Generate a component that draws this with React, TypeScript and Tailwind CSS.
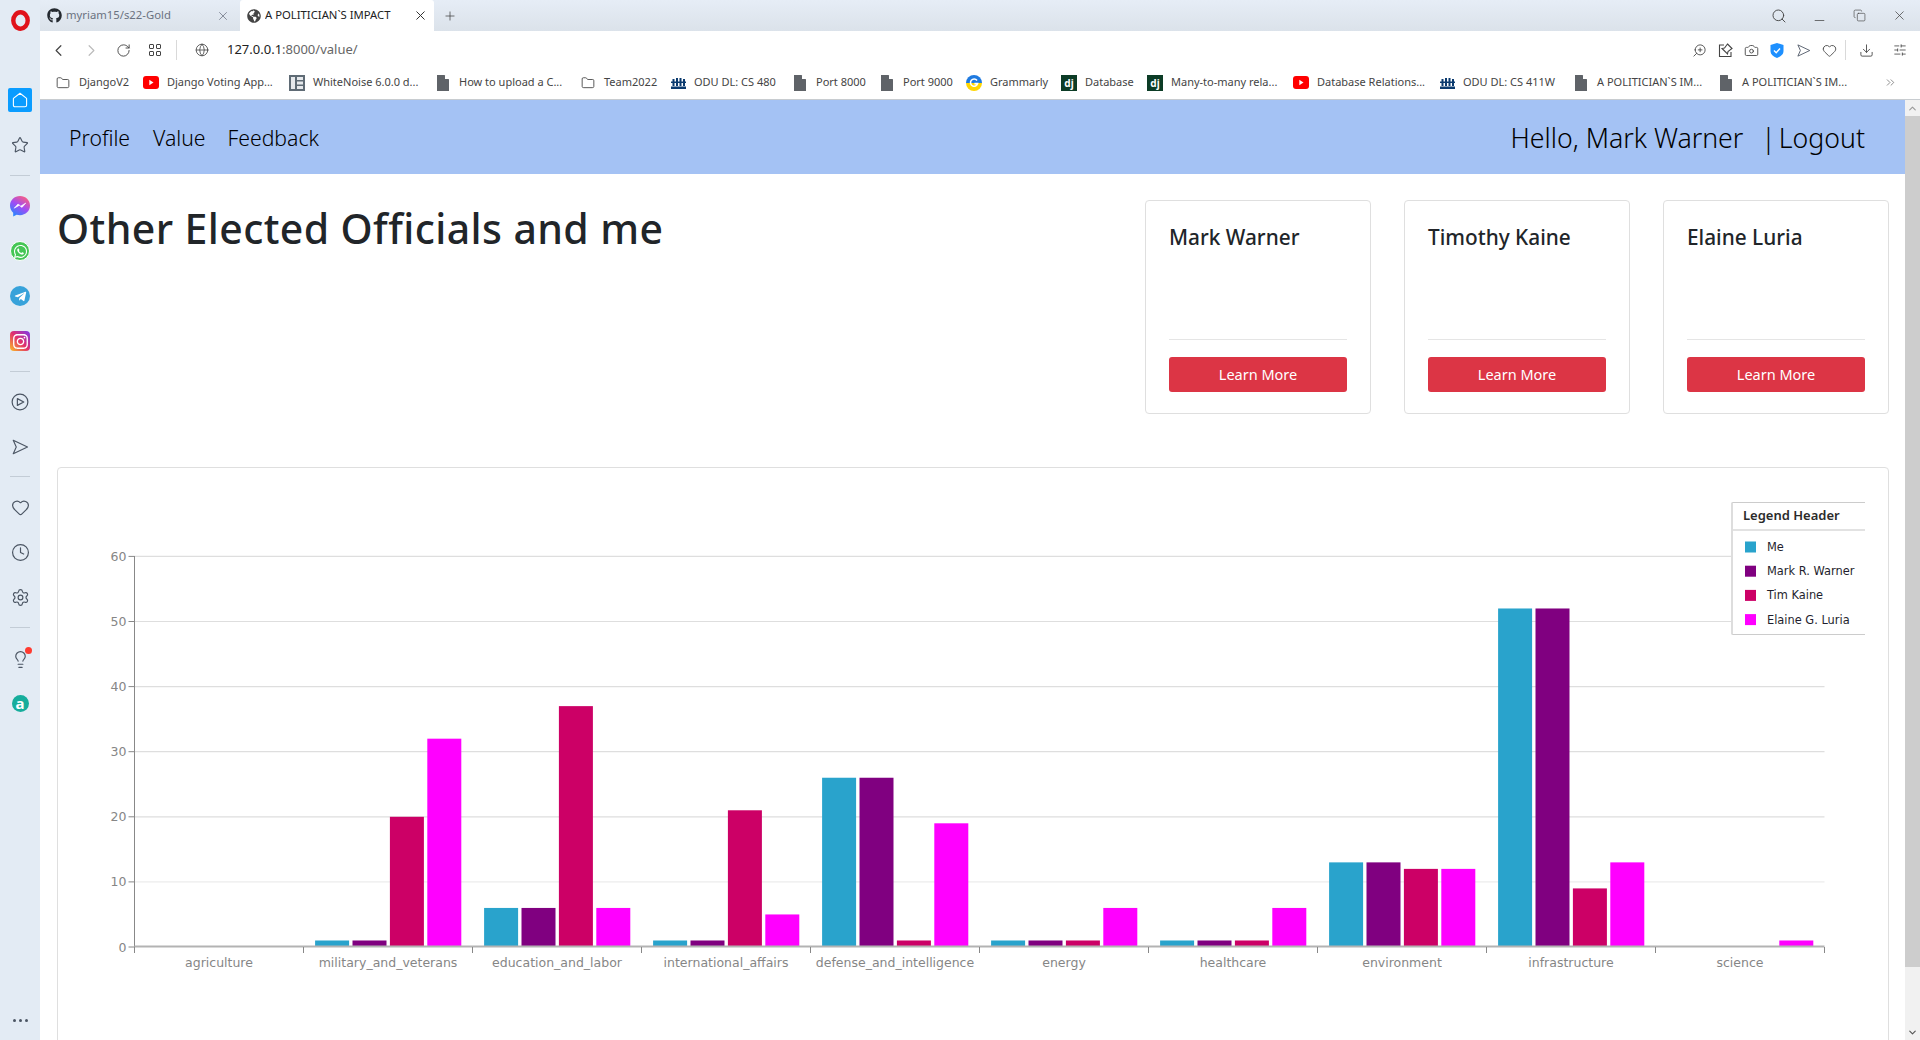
import React from "react";
import { ChevronLeft, ChevronRight, RotateCw, Globe, Search, Minus, Copy, X, Plus, Folder, ZoomIn, Camera, Heart, Download, SlidersHorizontal, Star, Clock, Settings, Lightbulb, ChevronsRight, ChevronUp, ChevronDown } from "lucide-react";
import { FaGithub, FaWhatsapp, FaTelegramPlane, FaInstagram, FaGlobeAmericas } from "react-icons/fa";

const ui = "font-['Noto_Sans','Open_Sans',sans-serif]";

function SendOutline({ size = 18, sw = 1.5 }: { size?: number; sw?: number }) {
  return (
    <svg width={size} height={size} viewBox="0 0 24 24" fill="none" stroke="#4b5563" strokeWidth={sw} strokeLinejoin="round">
      <path d="M3 3 L22 12 L3 21 L7 12 Z" />
    </svg>
  );
}
function CirclePlayIcon() {
  return (
    <svg width="18" height="18" viewBox="0 0 24 24" fill="none" stroke="#4b5563" strokeWidth="1.6" strokeLinejoin="round">
      <circle cx="12" cy="12" r="10.5" />
      <path d="M8.5 7.5 L17 12 L8.5 16.5 Z" />
    </svg>
  );
}
function DocIcon() {
  return (
    <svg width="12" height="16" viewBox="0 0 12 16" fill="#5f6368">
      <path d="M0 0 H7.5 L12 4.5 V16 H0 Z M8 0.5 V4 H11.5 Z" fillRule="evenodd" />
    </svg>
  );
}
function Crown() {
  return (
    <svg width="15" height="12" viewBox="0 0 15 12" fill="#0b3a6e">
      <rect x="0" y="9.5" width="15" height="2.5" />
      <rect x="0" y="4.5" width="15" height="1.5" />
      <rect x="1.5" y="2" width="2" height="7" />
      <rect x="5" y="1" width="2" height="8" />
      <rect x="8.5" y="1" width="2" height="8" />
      <rect x="12" y="2" width="2" height="7" />
    </svg>
  );
}
function YouTube() {
  return (
    <svg width="16" height="13" viewBox="0 0 16 13">
      <rect width="16" height="13" rx="3" fill="#ff0000" />
      <path d="M6.3 3.8 L10.5 6.5 L6.3 9.2 Z" fill="#fff" />
    </svg>
  );
}
function Dj() {
  return <span className="flex h-4 w-4 shrink-0 items-center justify-center bg-[#0c3c26] text-[10px] font-bold leading-none text-white">dj</span>;
}
function Grammarly() {
  return (
    <svg width="16" height="16" viewBox="0 0 16 16">
      <path d="M0 8 A8 8 0 0 1 16 8 Z" fill="#1f7ae0" />
      <path d="M0 8 A8 8 0 0 0 16 8 Z" fill="#ffd500" />
      <path d="M11 5.5 A3.6 3.6 0 1 0 11.6 8.6 H8.4" fill="none" stroke="#fff" strokeWidth="1.6" />
    </svg>
  );
}
function WhiteNoise() {
  return (
    <svg width="16" height="16" viewBox="0 0 16 16">
      <rect width="16" height="16" fill="#5f6b75" />
      <rect x="2" y="2" width="4" height="12" fill="#e6e9ec" />
      <rect x="8" y="2" width="6" height="3" fill="#e6e9ec" />
      <rect x="8" y="6.5" width="6" height="3" fill="#e6e9ec" />
      <rect x="8" y="11" width="6" height="3" fill="#e6e9ec" />
    </svg>
  );
}
function MessengerIcon() {
  return (
    <svg width="20" height="21" viewBox="0 0 20 21">
      <defs>
        <linearGradient id="msgr" x1="0.2" y1="1" x2="0.8" y2="0">
          <stop offset="0" stopColor="#1e8bff" />
          <stop offset="0.5" stopColor="#a04cf5" />
          <stop offset="1" stopColor="#ff5f7a" />
        </linearGradient>
      </defs>
      <path d="M10 0 C4.4 0 0 4.1 0 9.6 C0 12.5 1.2 15 3.2 16.7 V20.5 L6.6 18.7 C7.7 19 8.8 19.2 10 19.2 C15.6 19.2 20 15.1 20 9.6 C20 4.1 15.6 0 10 0 Z" fill="url(#msgr)" />
      <path d="M4.2 12.2 L8 8 L10.6 10.2 L15.8 7 L12 11.4 L9.4 9.2 Z" fill="#fff" stroke="#fff" strokeWidth="0.6" strokeLinejoin="round" />
    </svg>
  );
}

const bookmarks: { icon: React.ReactNode; text: string; cls: string }[] = [
  { icon: <Folder size={14} strokeWidth={1.5} color="#444" />, text: "DjangoV2", cls: "w-[51px]" },
  { icon: <YouTube />, text: "Django Voting App...", cls: "w-[109px]" },
  { icon: <WhiteNoise />, text: "WhiteNoise 6.0.0 d...", cls: "w-[109px]" },
  { icon: <DocIcon />, text: "How to upload a C...", cls: "w-[108px]" },
  { icon: <Folder size={14} strokeWidth={1.5} color="#444" />, text: "Team2022", cls: "w-[53px]" },
  { icon: <Crown />, text: "ODU DL: CS 480", cls: "w-[85px]" },
  { icon: <DocIcon />, text: "Port 8000", cls: "w-[50px]" },
  { icon: <DocIcon />, text: "Port 9000", cls: "w-[50px]" },
  { icon: <Grammarly />, text: "Grammarly", cls: "w-[58px]" },
  { icon: <Dj />, text: "Database", cls: "w-[49px]" },
  { icon: <Dj />, text: "Many-to-many rela...", cls: "w-[109px]" },
  { icon: <YouTube />, text: "Database Relations...", cls: "w-[109px]" },
  { icon: <Crown />, text: "ODU DL: CS 411W", cls: "w-[97px]" },
  { icon: <DocIcon />, text: "A POLITICIAN`S IM...", cls: "w-[108px]" },
  { icon: <DocIcon />, text: "A POLITICIAN`S IM...", cls: "w-[108px]" },
];

function Divider() {
  return <div className="h-px w-5 bg-[#c3ccd6]" />;
}

function Sidebar() {
  return (
    <aside className="flex h-full w-10 shrink-0 flex-col items-center bg-[#e3ebf4]">
      <div className="mt-[9px] flex h-[22px] w-[22px] items-center justify-center">
        <svg width="19" height="21" viewBox="0 0 19 21">
          <ellipse cx="9.5" cy="10.5" rx="7.2" ry="8.2" fill="none" stroke="#e0121a" strokeWidth="4.4" />
        </svg>
      </div>
      <div className="mt-[57px] flex h-6 w-6 items-center justify-center rounded-[2px] bg-[#0a9cff]">
        <svg width="16" height="16" viewBox="0 0 16 16" fill="none" stroke="#fff" strokeWidth="1.1" strokeLinejoin="round">
          <path d="M8 1.2 L14.6 6.4 V13.2 Q14.6 14.8 13 14.8 H3 Q1.4 14.8 1.4 13.2 V6.4 Z" />
        </svg>
      </div>
      <div className="mt-[24px]"><Star size={18} color="#4b5563" strokeWidth={1.5} /></div>
      <div className="mt-[21px]"><Divider /></div>
      <div className="mt-5"><MessengerIcon /></div>
      <div className="mt-[24px] flex h-5 w-5 items-center justify-center rounded-full border border-white bg-[#45c655]"><FaWhatsapp size={15} color="#fff" /></div>
      <div className="mt-[25px] flex h-5 w-5 items-center justify-center rounded-full bg-[#37a2da]"><FaTelegramPlane size={13} color="#fff" /></div>
      <div className="mt-[25px] flex h-5 w-5 items-center justify-center rounded-[4px] bg-[linear-gradient(45deg,#fbbf24,#e1306c,#7c3aed)]"><FaInstagram size={17} color="#fff" /></div>
      <div className="mt-[20px]"><Divider /></div>
      <div className="mt-[21px]"><CirclePlayIcon /></div>
      <div className="mt-[27px]"><SendOutline /></div>
      <div className="mt-[20px]"><Divider /></div>
      <div className="mt-[21px]"><Heart size={19} color="#4b5563" strokeWidth={1.5} /></div>
      <div className="mt-[26px]"><Clock size={19} color="#4b5563" strokeWidth={1.5} /></div>
      <div className="mt-[26px]"><Settings size={19} color="#4b5563" strokeWidth={1.5} /></div>
      <div className="mt-[20px]"><Divider /></div>
      <div className="relative mt-[22px]">
        <Lightbulb size={19} color="#4b5563" strokeWidth={1.5} />
        <span className="absolute right-[-2px] top-[-3px] h-[7px] w-[7px] rounded-full bg-[#ff3b30]" />
      </div>
      <div className={`mt-[26px] flex h-[17px] w-[17px] items-center justify-center rounded-full bg-[#16ad9c] text-[15px] font-bold leading-none text-white ${ui}`}>a</div>
      <div className="mt-auto mb-[18px] flex gap-[3px]">
        <span className="h-[3px] w-[3px] rounded-full bg-[#4b5563]" />
        <span className="h-[3px] w-[3px] rounded-full bg-[#4b5563]" />
        <span className="h-[3px] w-[3px] rounded-full bg-[#4b5563]" />
      </div>
    </aside>
  );
}

function TabStrip() {
  return (
    <div className="flex h-[31px] shrink-0 items-center bg-[linear-gradient(#e6edf6,#dbe2ea)]">
      <div className="ml-[7px] flex w-[193px] items-center text-[11.3px] text-[#6b7280]">
        <FaGithub size={15} color="#24292f" />
        <span className="ml-1 w-[150px] truncate">myriam15/s22-Gold</span>
        <X size={14} strokeWidth={1.3} color="#6b7280" />
      </div>
      <div className="flex h-full w-[194px] items-center self-end rounded-t-[3px] bg-white pl-[7px] text-[11.3px] text-[#222]">
        <FaGlobeAmericas size={14} color="#444" />
        <span className="ml-1 w-[148px] truncate">A POLITICIAN`S IMPACT</span>
        <X size={15} strokeWidth={1.6} color="#333" />
      </div>
      <div className="ml-[9px]"><Plus size={14} strokeWidth={1.3} color="#444" /></div>
      <div className="ml-auto flex items-center">
        <Search size={16} strokeWidth={1.4} color="#444" />
        <div className="ml-[25px] mt-[10px]"><Minus size={15} strokeWidth={1.2} color="#444" /></div>
        <div className="ml-[26px]"><Copy size={13} strokeWidth={1.2} color="#444" /></div>
        <div className="ml-[26px] mr-[13px]"><X size={15} strokeWidth={1.2} color="#444" /></div>
      </div>
    </div>
  );
}

function Toolbar() {
  return (
    <div className="flex h-[38px] shrink-0 items-center bg-white">
      <div className="ml-[9px]"><ChevronLeft size={19} strokeWidth={1.5} color="#444" /></div>
      <div className="ml-[14px]"><ChevronRight size={19} strokeWidth={1.5} color="#bbb" /></div>
      <div className="ml-[15px]"><RotateCw size={15} strokeWidth={1.5} color="#444" /></div>
      <div className="ml-[18px] grid grid-cols-2 gap-[2px]">
        <span className="h-[5px] w-[5px] rounded-[1px] border border-[#444]" />
        <span className="h-[5px] w-[5px] rounded-[1px] border border-[#444]" />
        <span className="h-[5px] w-[5px] rounded-[1px] border border-[#444]" />
        <span className="h-[5px] w-[5px] rounded-[1px] border border-[#444]" />
      </div>
      <div className="ml-[15px] h-5 w-px bg-[#d9d9d9]" />
      <div className="ml-[18px]"><Globe size={14} strokeWidth={1.4} color="#444" /></div>
      <div className="ml-[18px] text-[13px] text-[#222]">127.0.0.1<span className="text-[#666]">:8000/value/</span></div>
      <div className="ml-auto flex items-center">
        <ZoomIn size={15} strokeWidth={1.4} color="#444" className="-scale-x-100" />
        <svg className="ml-[11px]" width="15" height="15" viewBox="0 0 15 15" fill="none" stroke="#444" strokeWidth="1.1">
          <path d="M6 2 H1.5 V13.5 H13 V9" />
          <path d="M9.5 1 L14 5.5 L10 8.5 L9.5 11 L4 5.5 L6.5 5 Z" />
        </svg>
        <div className="ml-[11px]"><Camera size={15} strokeWidth={1.4} color="#444" /></div>
        <svg className="ml-[11px]" width="14" height="15" viewBox="0 0 14 15">
          <path d="M7 0 L13.5 2 V8 C13.5 11.5 10 14 7 15 C4 14 0.5 11.5 0.5 8 V2 Z" fill="#1e90ff" />
          <path d="M4 7.5 L6.2 9.7 L10 5.5" fill="none" stroke="#fff" strokeWidth="1.4" />
        </svg>
        <div className="ml-[12px]"><SendOutline size={15} sw={1.4} /></div>
        <div className="ml-[11px]"><Heart size={15} strokeWidth={1.4} color="#444" /></div>
        <div className="ml-[8px] h-5 w-px bg-[#d9d9d9]" />
        <div className="ml-[13px]"><Download size={15} strokeWidth={1.4} color="#444" /></div>
        <div className="ml-[19px] mr-[13px]"><SlidersHorizontal size={14} strokeWidth={1.4} color="#444" /></div>
      </div>
    </div>
  );
}

function Bookmarks() {
  return (
    <div className="flex h-[31px] shrink-0 items-center gap-[13px] border-b border-[#c8ccd0] bg-white pb-[3px] pl-[15px] pr-[23px] text-[11px] text-[#444]">
      {bookmarks.map((b, i) => (
        <div key={i} className="flex shrink-0 items-center gap-2">
          <span className="flex w-4 shrink-0 items-center justify-center">{b.icon}</span>
          <span className={`block whitespace-nowrap ${b.cls}`}>{b.text}</span>
        </div>
      ))}
      <div className="ml-auto"><ChevronsRight size={13} strokeWidth={1.2} color="#555" /></div>
    </div>
  );
}

const series = [
  { name: "Me", color: "#29a3cc" },
  { name: "Mark R. Warner", color: "#800080" },
  { name: "Tim Kaine", color: "#cc0066" },
  { name: "Elaine G. Luria", color: "#ff00ff" },
];
const data: [string, number[]][] = [
  ["agriculture", [0, 0, 0, 0]],
  ["military_and_veterans", [1, 1, 20, 32]],
  ["education_and_labor", [6, 6, 37, 6]],
  ["international_affairs", [1, 1, 21, 5]],
  ["defense_and_intelligence", [26, 26, 1, 19]],
  ["energy", [1, 1, 1, 6]],
  ["healthcare", [1, 1, 1, 6]],
  ["environment", [13, 13, 12, 12]],
  ["infrastructure", [52, 52, 9, 13]],
  ["science", [0, 0, 0, 1]],
];

function Chart() {
  const x0 = 134.5, yb = 947, band = 169, unit = 65.1 / 10;
  const chartFont = { fontFamily: "'DejaVu Sans', sans-serif" };
  return (
    <svg width="1807" height="640" viewBox="58 468 1807 640" className="block" style={chartFont}>
      {[10, 20, 30, 40, 50, 60].map((v) => (
        <line key={v} x1={x0} x2={1824.5} y1={yb - v * unit} y2={yb - v * unit} stroke={v === 10 ? "#ececec" : "#dedede"} strokeWidth="1.2" />
      ))}
      {[0, 10, 20, 30, 40, 50, 60].map((v) => (
        <g key={v}>
          <line x1={x0 - 6} x2={x0} y1={yb - v * unit} y2={yb - v * unit} stroke="#888" />
          <text x={x0 - 8} y={yb - v * unit + 4.5} textAnchor="end" fontSize="12.5" fill="#868686">{v}</text>
        </g>
      ))}
      {data.map(([label, vals], i) => (
        <g key={label}>
          {vals.map((v, s) =>
            v > 0 ? (
              <rect key={s} x={x0 + i * band + 11.6 + s * 37.4} y={yb - v * unit} width={34} height={v * unit} fill={series[s].color} />
            ) : null
          )}
          <text x={x0 + i * band + band / 2} y={967} textAnchor="middle" fontSize="12.5" fill="#868686">{label}</text>
        </g>
      ))}
      <line x1={x0} x2={x0} y1={556} y2={947} stroke="#888" />
      <line x1={x0} x2={1824.5} y1={946.5} y2={946.5} stroke="#b3b3b3" strokeWidth="2" />
      {Array.from({ length: 11 }).map((_, i) => (
        <line key={i} x1={x0 + i * band} x2={x0 + i * band} y1={947} y2={953} stroke="#888" />
      ))}
      <g>
        <rect x="1732" y="502.5" width="140" height="132" fill="#fff" />
        <line x1="1732" x2="1865" y1="502.5" y2="502.5" stroke="#cccccc" />
        <line x1="1732" x2="1865" y1="530" y2="530" stroke="#e2e2e2" strokeWidth="2" />
        <line x1="1732" x2="1865" y1="634.5" y2="634.5" stroke="#cccccc" />
        <line x1="1732" x2="1732" y1="502.5" y2="634.5" stroke="#dddddd" strokeWidth="2" />
        <text x="1743" y="520" fontSize="13" fontWeight="600" fill="#2b2b2b" style={{ fontFamily: "'Noto Sans', sans-serif" }}>Legend Header</text>
        {series.map((s, i) => (
          <g key={s.name}>
            <rect x="1745" y={541.5 + i * 24.2} width="11" height="11" fill={s.color} />
            <text x="1767" y={551 + i * 24.2} fontSize="11.4" fill="#1f1f2e">{s.name}</text>
          </g>
        ))}
      </g>
    </svg>
  );
}

function Official({ name }: { name: string }) {
  return (
    <div className="flex h-[214px] w-[226px] flex-col rounded-[4px] border border-[#dfdfdf] px-[23px] pt-[20px]">
      <h5 className="text-[20.8px] font-medium leading-[32px] text-[#212529]">{name}</h5>
      <div className="mt-[86px] h-px bg-[#e5e5e5]" />
      <button className="mt-[17px] h-[35px] rounded-[3px] bg-[#dc3545] text-[14.5px] text-white">Learn More</button>
    </div>
  );
}

function Page() {
  return (
    <main className={`min-w-0 flex-1 overflow-hidden bg-white ${ui}`}>
      <nav className="flex h-[74px] items-center bg-[#a4c2f4] pl-[29px] pr-[40px] pt-[2px] text-black">
        <a className="text-[21.2px] font-light">Profile</a>
        <a className="ml-[23px] text-[21.2px] font-light">Value</a>
        <a className="ml-[22px] text-[21.2px] font-light">Feedback</a>
        <span className="ml-auto text-[26.7px] font-light">Hello, Mark Warner</span>
        <span className="ml-[18px] text-[26.7px] font-light [word-spacing:-4px]">| Logout</span>
      </nav>
      <div className="px-[17px] pr-[16px] pt-[26px]">
        <div className="flex items-start justify-between">
          <h1 className="text-[41px] font-medium leading-[56px] tracking-[0.4px] text-[#212529]">Other Elected Officials and me</h1>
          <div className="flex gap-[33px]">
            <Official name="Mark Warner" />
            <Official name="Timothy Kaine" />
            <Official name="Elaine Luria" />
          </div>
        </div>
        <div className="mt-[53px] h-[700px] rounded-[4px] border border-[#dfdfdf]">
          <Chart />
        </div>
      </div>
    </main>
  );
}

function Scrollbar() {
  return (
    <div className="flex h-full w-[15px] shrink-0 flex-col bg-[#f1f1f1]">
      <div className="flex h-[16px] items-center justify-center"><ChevronUp size={11} strokeWidth={2.5} color="#9a9a9a" /></div>
      <div className="h-[851px] bg-[#cdcdcd]" />
      <div className="mt-auto flex h-[16px] items-center justify-center"><ChevronDown size={11} strokeWidth={2.5} color="#555" /></div>
    </div>
  );
}

export default function App() {
  return (
    <div className={`flex h-[1040px] w-[1920px] overflow-hidden bg-white ${ui}`}>
      <Sidebar />
      <div className="flex min-w-0 flex-1 flex-col">
        <TabStrip />
        <Toolbar />
        <Bookmarks />
        <div className="flex min-h-0 flex-1">
          <Page />
          <Scrollbar />
        </div>
      </div>
    </div>
  );
}
